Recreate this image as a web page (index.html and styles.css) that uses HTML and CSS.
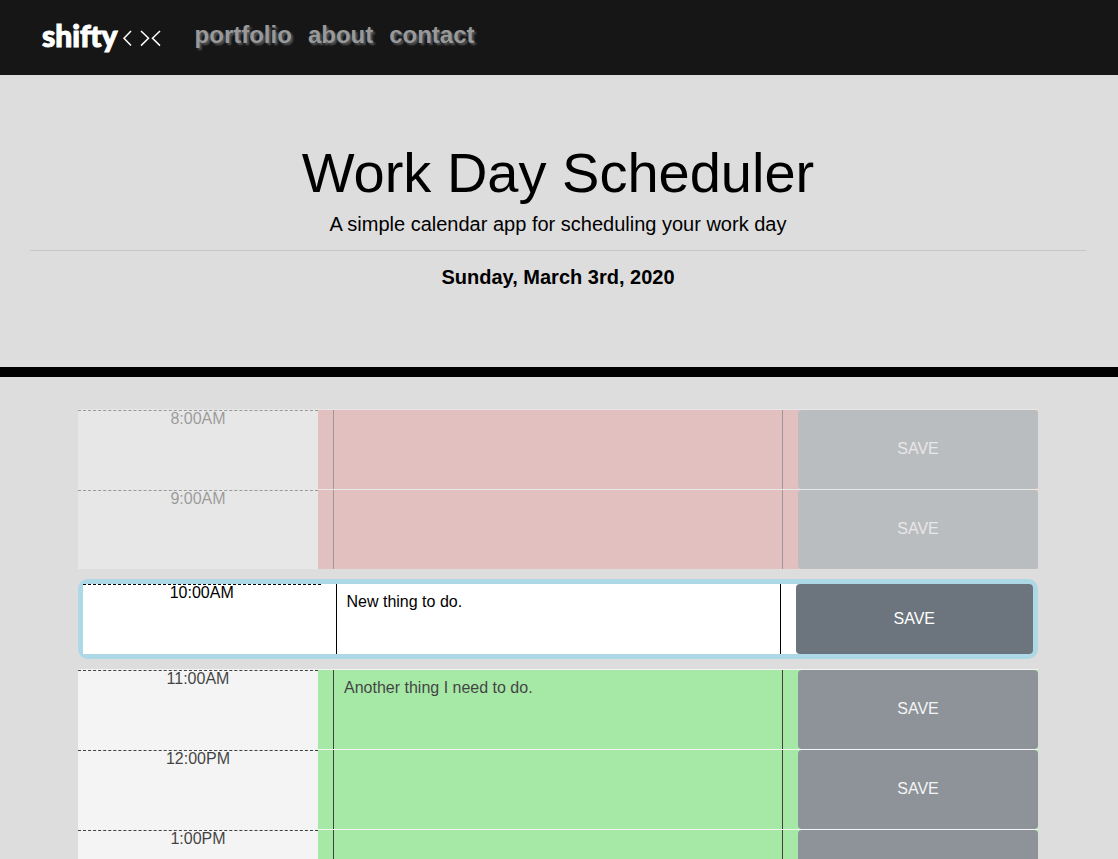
FILE: index.html
```html
<!DOCTYPE html>
<html lang="en">
<head>
<meta charset="utf-8">
<meta name="viewport" content="width=device-width, initial-scale=1">
<title>Work Day Scheduler</title>
<link rel="stylesheet" href="styles.css">
</head>
<body>
<nav class="navbar">
  <a class="brand" href="#">
    <span class="brand-name">shifty</span>
    <svg class="brand-mark" viewBox="0 0 40 18" width="40" height="18" aria-hidden="true">
      <path d="M10 2 L3 9.300 L10 16.600 M20 2 L27.500 9.300 L20 16.600 M39 2 L31.500 9.300 L39 16.600"/>
    </svg>
  </a>
  <div class="nav-links">
    <a class="nav-link" href="#">portfolio</a>
    <a class="nav-link" href="#">about</a>
    <a class="nav-link" href="#">contact</a>
  </div>
</nav>
<header class="hero">
  <h1 class="title">Work Day Scheduler</h1>
  <p class="lead">A simple calendar app for scheduling your work day</p>
  <hr class="rule">
  <p class="lead date">Sunday, March 3rd, 2020</p>
</header>
<main class="schedule">
  <section class="row past">
    <label class="hour" for="h8">8:00AM</label>
    <div class="entry"><textarea class="task" id="h8"></textarea></div>
    <button class="save" type="button">SAVE</button>
  </section>
  <section class="row past">
    <label class="hour" for="h9">9:00AM</label>
    <div class="entry"><textarea class="task" id="h9"></textarea></div>
    <button class="save" type="button">SAVE</button>
  </section>
  <section class="row present">
    <label class="hour" for="h10">10:00AM</label>
    <div class="entry"><textarea class="task" id="h10">New thing to do.</textarea></div>
    <button class="save" type="button">SAVE</button>
  </section>
  <section class="row future">
    <label class="hour" for="h11">11:00AM</label>
    <div class="entry"><textarea class="task" id="h11">Another thing I need to do.</textarea></div>
    <button class="save" type="button">SAVE</button>
  </section>
  <section class="row future">
    <label class="hour" for="h12">12:00PM</label>
    <div class="entry"><textarea class="task" id="h12"></textarea></div>
    <button class="save" type="button">SAVE</button>
  </section>
  <section class="row future">
    <label class="hour" for="h13">1:00PM</label>
    <div class="entry"><textarea class="task" id="h13"></textarea></div>
    <button class="save" type="button">SAVE</button>
  </section>
</main>
</body>
</html>
```
FILE: styles.css
```css
* { box-sizing: border-box; }

body {
  margin: 0;
  background: #ddd;
  color: #000;
  font: 16px/16px "Liberation Sans", Arial, sans-serif;
}

.navbar {
  display: flex;
  align-items: center;
  min-height: 75px;
  padding: 0 42px 6px;
  background: #161616;
}

.brand {
  display: flex;
  align-items: center;
  gap: 3px;
  color: #fff;
  text-decoration: none;
}

.brand-name {
  font: 900 30px/40px Lato, sans-serif;
  -webkit-text-stroke: 1px #fff;
}

.brand-mark {
  margin-top: 7px;
  fill: none;
  stroke: #fff;
  stroke-width: 1.5;
}

.nav-links {
  display: flex;
  gap: 16px;
  margin-left: 34px;
}

.nav-link {
  color: #999;
  font-size: 24px;
  font-weight: 700;
  line-height: 32px;
  text-decoration: none;
  text-shadow: 2px 2px 2px #555;
}

.hero {
  padding: 64px 32px 64px 30px;
  border-bottom: 10px solid #000;
  text-align: center;
}

.title {
  margin: 0 0 8px;
  font-size: 56px;
  font-weight: 400;
  line-height: 67px;
}

.lead {
  margin: 0;
  font-size: 20px;
  line-height: 20px;
}

.date {
  margin-bottom: 16px;
  font-weight: 700;
}

.rule {
  margin: 16px 0;
  border: 0;
  border-top: 1px solid #c6c6c6;
}

.schedule {
  padding: 32px 80px 32px 78px;
}

.row {
  display: grid;
  grid-template-columns: 1fr 2fr 1fr;
  min-height: 80px;
  border-top: 1px solid #fff;
}

.past {
  background: #f08080;
  opacity: 0.3;
}

.present {
  margin: 10px 0;
  background: #fff;
  border: 5px solid #add8e6;
  border-radius: 10px;
}

.future {
  background: #90ee90;
  opacity: 0.7;
}

.hour {
  background: #fff;
  border-top: 1px dashed #000;
  text-align: center;
}

.entry {
  display: flex;
  padding: 0 15px;
}

.task {
  flex: 1;
  height: 100%;
  min-width: 0;
  padding: 9px 10px;
  border: 0 solid #000;
  border-width: 0 1px;
  border-radius: 0;
  background: transparent;
  color: #000;
  font: inherit;
  line-height: 18px;
  resize: none;
}

.save {
  padding: 0 0 1px;
  border: 0;
  border-radius: 4px;
  background: #6c757d;
  color: #fff;
  font: inherit;
}
```
